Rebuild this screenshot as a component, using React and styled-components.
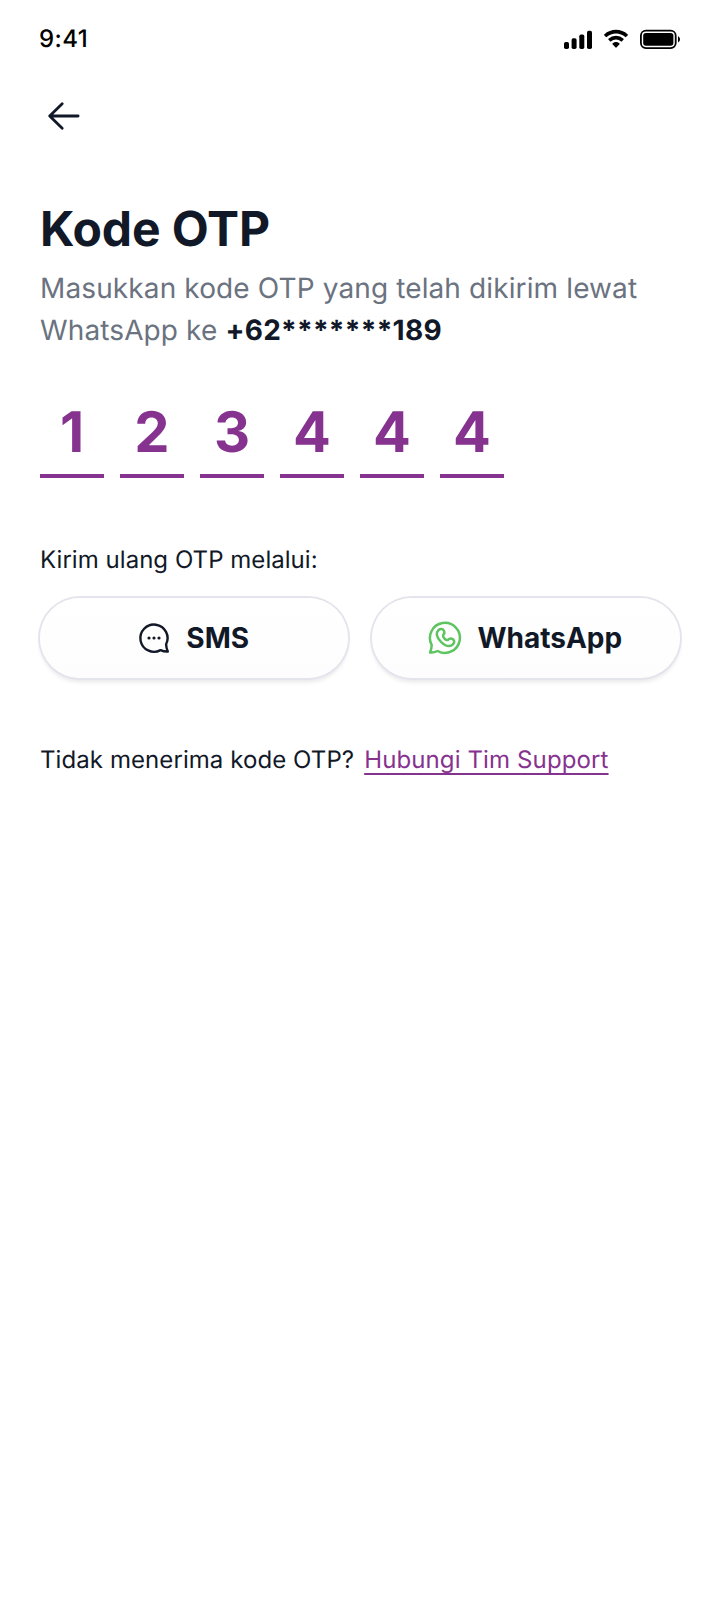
import React from "react";
import styled, { createGlobalStyle } from "styled-components";

const GlobalStyle = createGlobalStyle`
  *, *::before, *::after { box-sizing: border-box; }
  body {
    margin: 0;
    background: #fff;
    color: #111827;
    font-family: Inter, "Liberation Sans", sans-serif;
    -webkit-font-smoothing: antialiased;
    text-rendering: geometricPrecision;
  }
  button { font: inherit; color: inherit; }
`;

const Screen = styled.main`
  width: 720px;
  min-height: 1600px;
  padding: 0 40px;
  display: flex;
  flex-direction: column;
  background: #fff;
`;

const StatusBar = styled.header`
  height: 80px;
  padding-bottom: 2px;
  margin: 0 -1px;
  display: flex;
  align-items: center;
  justify-content: space-between;
  color: #000;
`;

const Clock = styled.time`
  font-size: 24px;
  font-weight: 500;
  line-height: 30px;
  letter-spacing: 0.4px;
`;

const StatusIcons = styled.svg`
  display: block;
  width: 117px;
  height: 20px;
`;

const BackButton = styled.button`
  width: 48px;
  height: 48px;
  margin-top: 12px;
  padding: 0;
  border: 0;
  background: none;
  svg { display: block; }
`;

const Title = styled.h1`
  margin: 60px 0 0;
  font-size: 48px;
  font-weight: 700;
  line-height: 58px;
  letter-spacing: -0.12px;
`;

const Lead = styled.p`
  margin: 9px 0 0;
  font-size: 28px;
  line-height: 42px;
  letter-spacing: 0.12px;
  color: #6b7280;
`;

const LeadLine = styled.span`
  display: flex;
  gap: 8px;
`;

const Phone = styled.strong`
  font-weight: 700;
  letter-spacing: 0.28px;
  color: #111827;
`;

const CodeRow = styled.div`
  display: flex;
  gap: 16px;
  margin-top: 41px;
`;

const Digit = styled.span`
  width: 64px;
  height: 86px;
  padding-top: 6px;
  border-bottom: 4px solid #86328f;
  color: #86328f;
  font-size: 56px;
  font-weight: 700;
  line-height: 68px;
  text-align: center;
`;

const Label = styled.p`
  margin: 64px 0 0;
  font-size: 24px;
  line-height: 36px;
  letter-spacing: 0.04px;
`;

const Channels = styled.div`
  display: grid;
  grid-template-columns: 1fr 1fr;
  gap: 24px;
  margin-top: 20px;
`;

const ChannelButton = styled.button`
  height: 80px;
  padding: 0 5px 0 0;
  display: flex;
  align-items: center;
  justify-content: center;
  gap: 12.5px;
  border: 0;
  border-radius: 40px;
  background: linear-gradient(#fff, #fdfdfe);
  box-shadow: 0 0 0 2px #e4e5ec, 0 4px 4px rgba(17, 24, 39, 0.1);
  font-size: 28px;
  font-weight: 700;
  line-height: 42px;
  svg { display: block; flex: none; }
`;

const Help = styled.p`
  display: flex;
  align-items: flex-start;
  gap: 10px;
  margin: 64px 0 0;
  font-size: 24px;
  line-height: 36px;
  letter-spacing: 0.08px;
`;

const SupportLink = styled.a`
  color: #86328f;
  letter-spacing: 0.12px;
  text-decoration: underline;
  text-decoration-thickness: 1.5px;
  text-underline-offset: 4.5px;
  text-decoration-skip-ink: none;
`;

const CODE = ["1", "2", "3", "4", "4", "4"];

function DeviceStatus() {
  return (
    <StatusIcons viewBox="564 29 117 20" aria-hidden="true">
      <rect x="564" y="42" width="5" height="7" rx="1.7" />
      <rect x="571.6" y="38.3" width="5" height="10.7" rx="1.7" />
      <rect x="579.3" y="34.5" width="5" height="14.5" rx="1.7" />
      <rect x="587" y="30.7" width="5" height="18.3" rx="1.7" />
      <path d="M616 33.4c3.5 0 6.8 1.3 9.3 3.7.2.2.5.2.7 0l1.8-1.9a.6.6 0 0 0 0-.8c-6.6-6.1-17-6.1-23.6 0a.6.6 0 0 0 0 .8l1.8 1.9c.2.2.5.2.7 0 2.5-2.4 5.8-3.7 9.3-3.7z" />
      <path d="M616 39.4c1.9 0 3.7.7 5.1 2 .2.2.5.2.7 0l1.8-1.9a.6.6 0 0 0 0-.8 11.2 11.2 0 0 0-15.2 0 .6.6 0 0 0 0 .8l1.8 1.9c.2.2.5.2.7 0 1.4-1.3 3.2-2 5.1-2z" />
      <path d="M619.5 43.5a.5.5 0 0 1 0 .8l-3.1 3.2a.6.6 0 0 1-.8 0l-3.1-3.2a.5.5 0 0 1 0-.8 5.5 5.5 0 0 1 7 0z" />
      <rect x="640.9" y="30.7" width="34.8" height="17.4" rx="5" fill="none" stroke="#000" strokeWidth="1.8" />
      <rect x="643.2" y="33" width="30.2" height="12.8" rx="2.8" />
      <path d="M678 36.2v6.2c1.2-.5 2-1.7 2-3.1s-.8-2.6-2-3.1z" />
    </StatusIcons>
  );
}

function BackArrow() {
  return (
    <svg width="48" height="48" viewBox="0 0 48 48" fill="none" stroke="#111827" strokeWidth="2.8" strokeLinecap="round" strokeLinejoin="round">
      <path d="M38.1 24H9.7M22.2 11.8 9.7 24l12.5 12.2" />
    </svg>
  );
}

function SmsIcon() {
  return (
    <svg width="40" height="40" viewBox="0 0 40 40" fill="none" stroke="#111827" strokeWidth="2.4" strokeLinecap="round" strokeLinejoin="round">
      <path d="M32.1 26.3A13.6 13.6 0 1 0 26.5 32.1Q30 33.7 33.8 33.5Q32.2 30 32.1 26.3Z" />
      <g fill="#111827" stroke="none">
        <circle cx="15" cy="20" r="1.6" />
        <circle cx="20" cy="20" r="1.6" />
        <circle cx="25" cy="20" r="1.6" />
      </g>
    </svg>
  );
}

function WhatsAppIcon() {
  return (
    <svg width="40" height="40" viewBox="0 0 40 40" fill="none" stroke="#5cc55f" strokeWidth="2.5" strokeLinecap="round" strokeLinejoin="round">
      <path d="M6.7 27A15 15 0 1 1 12.6 33Q9 34.8 5.1 34.5Q6.5 31 6.7 27Z" />
      <path d="M13.4 12.2C15.4 10.5 17.8 10.7 18.8 12.5C19.8 14.5 19.8 15.7 18.1 17.2C17.5 19.3 20.8 22.7 23 22C24.5 20.2 25.8 20.1 27.7 21.2C29.6 22.3 29.7 24.5 27.9 26.4C24.7 29.4 20 27.6 16 23.8C12 19.8 10.5 15.3 13.4 12.2Z" />
    </svg>
  );
}

export default function App() {
  return (
    <>
      <GlobalStyle />
      <Screen>
        <StatusBar>
          <Clock>9:41</Clock>
          <DeviceStatus />
        </StatusBar>
        <BackButton aria-label="Kembali">
          <BackArrow />
        </BackButton>
        <Title>Kode OTP</Title>
        <Lead>
          <LeadLine>Masukkan kode OTP yang telah dikirim lewat</LeadLine>
          <LeadLine>
            <span>WhatsApp ke</span>
            <Phone>+62*******189</Phone>
          </LeadLine>
        </Lead>
        <CodeRow>
          {CODE.map((digit, index) => (
            <Digit key={index}>{digit}</Digit>
          ))}
        </CodeRow>
        <Label>Kirim ulang OTP melalui:</Label>
        <Channels>
          <ChannelButton>
            <SmsIcon />
            SMS
          </ChannelButton>
          <ChannelButton>
            <WhatsAppIcon />
            WhatsApp
          </ChannelButton>
        </Channels>
        <Help>
          <span>Tidak menerima kode OTP?</span>
          <SupportLink>Hubungi Tim Support</SupportLink>
        </Help>
      </Screen>
    </>
  );
}
